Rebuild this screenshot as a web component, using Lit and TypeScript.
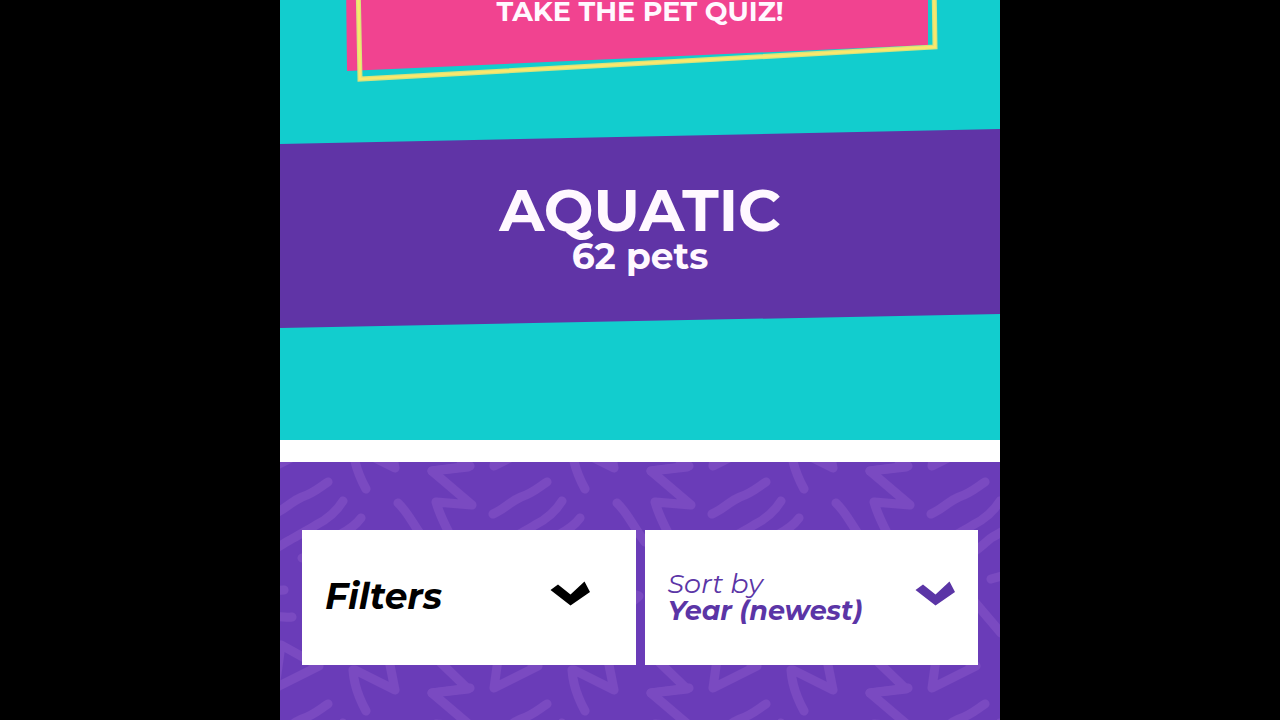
import { LitElement, html, css, svg } from "lit";
import { customElement } from "lit/decorators.js";

const chevron = html`<svg class="chevron" viewBox="0 0 40 25" aria-hidden="true">
  <path d="M0.5 9 L8 3.5 L20.5 13.5 L34.5 0.5 L40 11 L20.5 24.5 Z" fill="currentColor" />
</svg>`;

const squiggles = svg`
  <path d="M-6 52 C4 48 12 39 22 35 C34 31 40 25 48 20" />
  <path d="M63 39 C55 52 46 58 36 63 C28 68 20 72 10 78 C4 81 2 83 -2 85" />
  <path d="M81 56 C74 66 64 70 54 76 C44 84 38 92 22 96" />
  <path d="M73 -14 C74 2 80 16 86 27 M75 -14 L115 6 L109 -24" />
  <path d="M190 4 L152 9 L192 43 L156 40 C160 54 166 66 176 84" />
  <path d="M152 9 L188 5 L158 -24" />
  <path d="M118 41 C128 50 134 64 146 80" />
  <path d="M214 4 L220 -39 L258 -18 Z" />
  <path d="M54 117 L72 112" />
  <path d="M36 138 L64 171" />
  <path d="M-8 129 L4 128 M-14 158 C-4 152 4 156 12 155" />
  <path d="M100 120 L140 134 L112 158 M160 128 L196 112 L180 156" />
`;

@customElement("app-root")
export class AppRoot extends LitElement {
  static styles = css`
    :host {
      display: flex;
      justify-content: center;
      height: 100vh;
      overflow: hidden;
      background: #000;
      font-family: Montserrat, Inter, sans-serif;
      font-weight: 700;
    }
    .page {
      display: flex;
      flex-direction: column;
      flex: 0 1 720px;
      min-width: 0;
      background: #fff;
    }
    .hero {
      display: flex;
      flex-direction: column;
      background: #12cdce;
      padding-bottom: 112px;
      margin-bottom: 22px;
    }
    .quiz {
      display: grid;
      justify-items: center;
      margin: 0 60px 46px;
      color: #fff8ff;
      text-decoration: none;
      font-size: 27px;
      line-height: 24px;
    }
    .quiz > * {
      grid-area: 1 / 1;
    }
    .quiz-shape {
      width: 100%;
      height: 83px;
    }
    .quiz-text {
      z-index: 1;
    }
    .band {
      display: flex;
      flex-direction: column;
      align-items: center;
      box-sizing: border-box;
      height: 199px;
      padding-top: 52px;
      color: #fff8ff;
      background: #6034a6;
      clip-path: polygon(0 15px, 100% 0, 100% calc(100% - 14px), 0 100%);
    }
    h1,
    p {
      margin: 0;
      font-weight: inherit;
    }
    h1 {
      font-size: 59px;
      line-height: 59px;
    }
    p {
      font-size: 36px;
      line-height: 32px;
    }
    .list {
      flex: 1;
      display: grid;
    }
    .list > * {
      grid-area: 1 / 1;
    }
    .pattern {
      width: 100%;
      height: 100%;
    }
    .controls {
      z-index: 1;
      display: grid;
      grid-template-columns: 1fr 1fr;
      gap: 9px;
      align-self: start;
      padding: 68px 22px;
    }
    .card {
      display: flex;
      align-items: center;
      justify-content: space-between;
      min-width: 0;
      height: 135px;
      box-sizing: border-box;
      border: 0;
      padding: 0 23px 2px;
      background: #fff;
      color: #5b35a6;
      font-family: inherit;
      font-style: italic;
      font-size: 27px;
      line-height: 27px;
      cursor: pointer;
    }
    .filters {
      padding-right: 46px;
      color: #000;
      font-size: 36px;
      font-weight: 700;
    }
    .chevron {
      flex: none;
      width: 40px;
      height: 25px;
      margin-bottom: 6px;
    }
    .sort {
      display: flex;
      flex-direction: column;
      align-items: flex-start;
    }
    .sort-label {
      font-weight: 400;
    }
    select {
      appearance: none;
      border: 0;
      padding: 0;
      margin: 0;
      height: 27px;
      background: none;
      color: inherit;
      font: inherit;
      font-weight: 700;
      overflow: visible;
    }
  `;

  render() {
    return html`
      <main class="page">
        <section class="hero">
          <a class="quiz" href="#quiz">
            <svg class="quiz-shape" viewBox="0 0 600 83" preserveAspectRatio="none" aria-hidden="true">
              <path d="M6 -20 L7 71 L588 45 L588 -20 Z" fill="#f14390" />
              <path d="M18 -20 L20 79 L595 47 L594 -20" fill="none" stroke="#d8e37c" stroke-width="5" />
              <path d="M18 -20 L20 79 L595 47 L594 -20" fill="none" stroke="#fae86c" stroke-width="2.5" />
            </svg>
            <span class="quiz-text">TAKE THE PET QUIZ!</span>
          </a>
          <header class="band">
            <h1>AQUATIC</h1>
            <p>62 pets</p>
          </header>
        </section>
        <section class="list">
          <svg class="pattern" aria-hidden="true">
            <defs>
              <pattern id="squiggles" width="219" height="222" patternUnits="userSpaceOnUse">
                <g fill="none" stroke="#7a4ac1" stroke-width="9" stroke-linecap="round" stroke-linejoin="round">
                  ${[-219, 0, 219].map((x) => [-222, 0, 222].map(
                    (y) => svg`<g transform="translate(${x} ${y})">${squiggles}</g>`
                  ))}
                </g>
              </pattern>
            </defs>
            <rect width="100%" height="100%" fill="#6a3cb8" />
            <rect width="100%" height="100%" fill="url(#squiggles)" />
          </svg>
          <div class="controls">
            <button class="card filters" type="button">Filters ${chevron}</button>
            <label class="card" for="sort">
              <span class="sort">
                <span class="sort-label">Sort by</span>
                <select id="sort">
                  <option>Year (newest)</option>
                  <option>Year (oldest)</option>
                </select>
              </span>
              ${chevron}
            </label>
          </div>
        </section>
      </main>
    `;
  }
}
